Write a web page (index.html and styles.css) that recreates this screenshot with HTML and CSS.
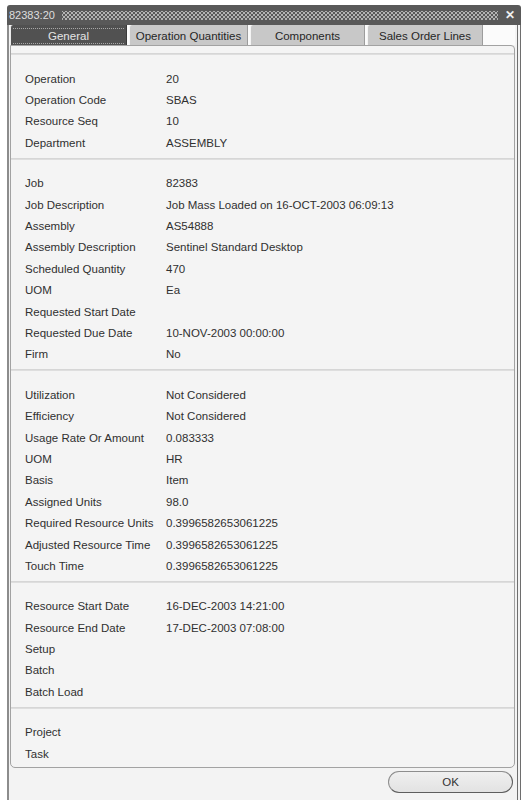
FILE: index.html
```html
<!DOCTYPE html>
<html>
<head>
<meta charset="utf-8">
<link rel="stylesheet" href="styles.css">
</head>
<body>
<div class="window">
  <div class="titlebar">
    <span class="title">82383:20</span>
    <span class="grip"></span>
    <span class="close">✕</span>
  </div>
  <div class="frame">
    <div class="tabs">
      <div class="tab active"><span class="tab-label">General</span></div>
      <div class="tab tab-oq"><span class="tab-label">Operation Quantities</span></div>
      <div class="tab tab-comp"><span class="tab-label">Components</span></div>
      <div class="tab tab-sol"><span class="tab-label">Sales Order Lines</span></div>
    </div>
    <div class="panel">
      <div class="sep"></div>
      <div class="section">
        <div class="row"><span>Operation</span><span>20</span></div>
        <div class="row"><span>Operation Code</span><span>SBAS</span></div>
        <div class="row"><span>Resource Seq</span><span>10</span></div>
        <div class="row"><span>Department</span><span>ASSEMBLY</span></div>
      </div>
      <div class="sep"></div>
      <div class="section">
        <div class="row"><span>Job</span><span>82383</span></div>
        <div class="row"><span>Job Description</span><span>Job Mass Loaded on 16-OCT-2003 06:09:13</span></div>
        <div class="row"><span>Assembly</span><span>AS54888</span></div>
        <div class="row"><span>Assembly Description</span><span>Sentinel Standard Desktop</span></div>
        <div class="row"><span>Scheduled Quantity</span><span>470</span></div>
        <div class="row"><span>UOM</span><span>Ea</span></div>
        <div class="row"><span>Requested Start Date</span><span></span></div>
        <div class="row"><span>Requested Due Date</span><span>10-NOV-2003 00:00:00</span></div>
        <div class="row"><span>Firm</span><span>No</span></div>
      </div>
      <div class="sep"></div>
      <div class="section">
        <div class="row"><span>Utilization</span><span>Not Considered</span></div>
        <div class="row"><span>Efficiency</span><span>Not Considered</span></div>
        <div class="row"><span>Usage Rate Or Amount</span><span>0.083333</span></div>
        <div class="row"><span>UOM</span><span>HR</span></div>
        <div class="row"><span>Basis</span><span>Item</span></div>
        <div class="row"><span>Assigned Units</span><span>98.0</span></div>
        <div class="row"><span>Required Resource Units</span><span>0.3996582653061225</span></div>
        <div class="row"><span>Adjusted Resource Time</span><span>0.3996582653061225</span></div>
        <div class="row"><span>Touch Time</span><span>0.3996582653061225</span></div>
      </div>
      <div class="sep"></div>
      <div class="section">
        <div class="row"><span>Resource Start Date</span><span>16-DEC-2003 14:21:00</span></div>
        <div class="row"><span>Resource End Date</span><span>17-DEC-2003 07:08:00</span></div>
        <div class="row"><span>Setup</span><span></span></div>
        <div class="row"><span>Batch</span><span></span></div>
        <div class="row"><span>Batch Load</span><span></span></div>
      </div>
      <div class="sep"></div>
      <div class="section last">
        <div class="row"><span>Project</span><span></span></div>
        <div class="row"><span>Task</span><span></span></div>
      </div>
    </div>
    <div class="footer">
      <button class="ok">OK</button>
    </div>
  </div>
</div>
</body>
</html>
```

FILE: styles.css
```css
* { box-sizing: border-box; }

html, body {
  margin: 0;
  padding: 0;
  background: #ffffff;
  overflow: hidden;
}

body {
  font-family: "Liberation Sans", Arial, sans-serif;
  font-size: 11.5px;
  color: #303030;
}

.window {
  width: 514px;
  margin: 5px 0 0 7px;
}

.titlebar {
  height: 20px;
  background: #595959;
  border-radius: 3px 3px 0 0;
  display: flex;
  align-items: center;
  padding: 0 6px 0 2px;
  gap: 7px;
}

.title {
  color: #dedede;
  font-family: "Liberation Sans", Arial, sans-serif;
  font-size: 11px;
}

.grip {
  flex: 1;
  height: 9px;
  background-image:
    radial-gradient(circle, #b4b4b4 0.7px, transparent 1.1px),
    radial-gradient(circle, #b4b4b4 0.7px, transparent 1.1px);
  background-size: 4px 4px, 4px 4px;
  background-position: 0 0, 2px 2px;
}

.close {
  color: #f0f0f0;
  font-size: 12px;
  font-weight: bold;
  line-height: 1;
}

.frame {
  border-left: 2px solid #8c8c8c;
  border-right: 4px double #6e6e6e;
  padding: 0 2px 0 1px;
  background: #f3f3f3;
  padding-bottom: 20px;
}

.tabs {
  display: flex;
  height: 20px;
  gap: 2px;
  background: #fbfbfb;
}

.tab {
  display: flex;
  flex-direction: column;
  background: #c8c8c8;
  border-left: 1px solid #f4f4f4;
  border-right: 1px solid #9c9c9c;
  border-radius: 3px 0 0 0;
  padding: 3px 2px 1px;
  color: #262626;
}

.tab.active {
  width: 117px;
  background: #515151;
  color: #e4e4e4;
  border-left: 1px solid #eaeaea;
  border-right: 1px solid #3a3a3a;
}

.tab-oq { width: 119px; }
.tab-comp { width: 115px; }
.tab-sol { width: 116px; }

.tab-label {
  flex: 1;
  display: flex;
  align-items: center;
  justify-content: center;
  border-top: 1px solid transparent;
  border-bottom: 1px solid transparent;
  white-space: nowrap;
  font-size: 11.5px;
}

.tab.active .tab-label {
  border-top: 1px dotted #a8a8a8;
  border-bottom: 1px dotted #a8a8a8;
}

.panel {
  border: 1px solid #a2a2a2;
  border-radius: 0 4px 5px 5px;
  background: #f4f4f4;
  padding-top: 7px;
}

.sep {
  height: 2px;
  background: linear-gradient(#d2d2d2, #e2e2e2);
}

.section {
  padding: 13px 0 4px 14px;
}

.section.last {
  padding-bottom: 3px;
}

.row {
  display: grid;
  grid-template-columns: 141px 1fr;
  height: 21.4px;
  align-items: center;
  white-space: nowrap;
}

.footer {
  display: flex;
  justify-content: flex-end;
  padding: 3px 2px 0 0;
}

.ok {
  width: 125px;
  height: 22px;
  border-radius: 11px;
  border: 1px solid #8e8e8e;
  border-bottom-color: #5e5e5e;
  border-right-color: #5e5e5e;
  background: linear-gradient(#f0f0f0, #e2e2e2);
  font-family: "Liberation Sans", Arial, sans-serif;
  font-size: 11.5px;
  color: #333;
  padding: 0;
}
```
